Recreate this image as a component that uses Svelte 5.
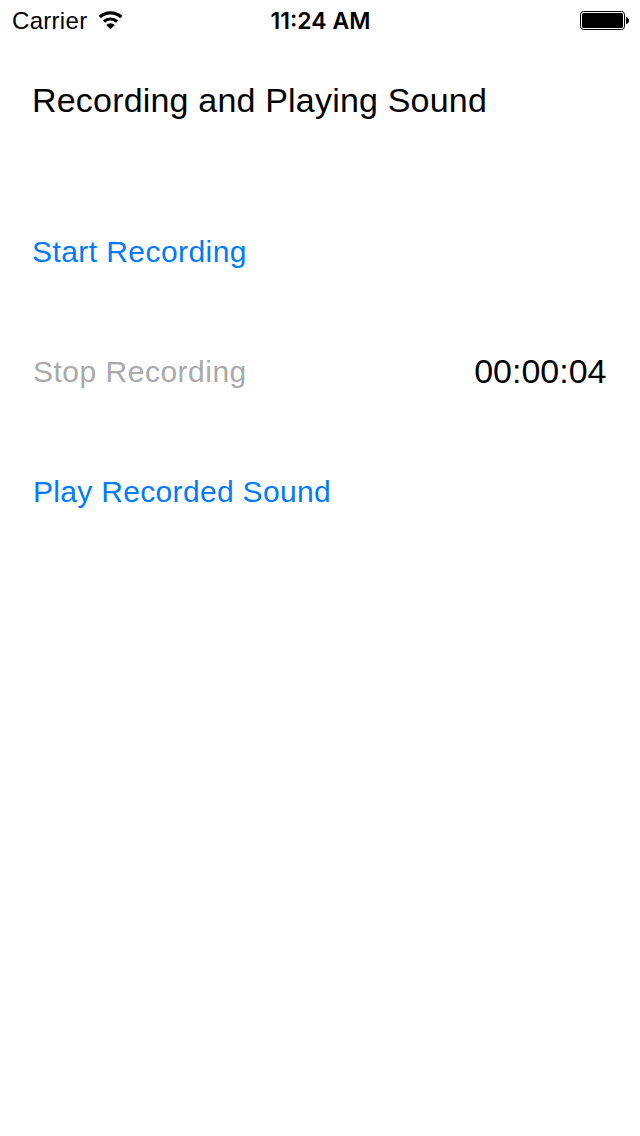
<script>
  const title = 'Recording and Playing Sound';
  const elapsed = '00:00:04';
</script>

<div class="screen">
  <header class="status">
    <div class="left">
      <span class="carrier">Carrier</span>
      <svg class="wifi" width="26" height="20" viewBox="0 0 26 20" fill="none" stroke="#000">
        <path d="M1.800 7 A15.800 15.800 0 0 1 23.200 7" stroke-width="3.300" />
        <path d="M5.900 11.500 A10 10 0 0 1 19.100 11.500" stroke-width="3.100" />
        <path d="M12.500 19.200 L8.200 15 A6.200 6.200 0 0 1 16.800 15 Z" fill="#000" stroke="none" />
      </svg>
    </div>
    <time class="clock">11:24 AM</time>
    <svg class="battery" width="49" height="19" viewBox="0 0 49 19">
      <rect x=".5" y=".5" width="44" height="18" rx="3" fill="none" stroke="#000" />
      <rect x="2" y="2" width="41" height="15" rx="1.5" />
      <path d="M46 6 Q49 6.500 49 9.500 Q49 12.500 46 13 Z" />
    </svg>
  </header>
  <h1>{title}</h1>
  <main>
    <div class="row"><button class="start">Start Recording</button></div>
    <div class="row">
      <button class="stop" disabled>Stop Recording</button>
      <output>{elapsed}</output>
    </div>
    <div class="row"><button class="play">Play Recorded Sound</button></div>
  </main>
</div>

<style>
  :global(body) { background: #fff; }
  .screen {
    box-sizing: border-box;
    height: 1136px;
    font-family: "Liberation Sans", Arial, sans-serif;
    color: #000;
  }
  .status {
    display: grid;
    grid-template-columns: 1fr auto 1fr;
    align-items: center;
    height: 40px;
    padding: 0 11px 0 12px;
    font-size: 24px;
  }
  .left { display: flex; align-items: center; gap: 10.500px; }
  .carrier { padding-top: 2px; letter-spacing: .3px; }
  .clock {
    padding-top: 1px;
    font: 600 23px Inter, "Liberation Sans", sans-serif;
  }
  .battery { justify-self: end; }
  h1 {
    margin: 0;
    padding: 0 32px;
    height: 120px;
    line-height: 120px;
    font-size: 34px;
    font-weight: normal;
    letter-spacing: .19px;
    white-space: nowrap;
  }
  main { padding: 32px 33.500px 0 32px; }
  .row {
    display: flex;
    align-items: center;
    justify-content: space-between;
    height: 120px;
  }
  button {
    border: 0;
    padding: 0;
    background: none;
    color: #007aff;
    font: 30px "Liberation Sans", Arial, sans-serif;
  }
  button:disabled { color: #aaa; }
  .start { letter-spacing: .43px; }
  .stop { padding-left: 1px; letter-spacing: .5px; }
  .play { padding-left: 1px; letter-spacing: .32px; }
  output { padding-bottom: 2px; font-size: 34px; }
</style>
